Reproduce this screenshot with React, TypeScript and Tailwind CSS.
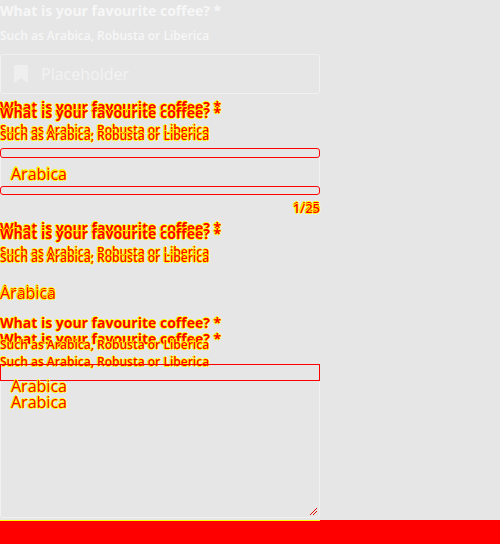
import React from "react";

const diff = "text-[#ff0000] [text-shadow:1px_0_0_#ffff00,-1px_0_0_#ffff00,0_1px_0_#ffff00,0_-1px_0_#ffff00]";

function Doubled({ text, className, shift }: { text: string; className: string; shift: string }) {
  return (
    <div className={`relative ${className} ${diff}`}>
      <div>{text}</div>
      <div className={`absolute left-0 ${shift}`}>{text}</div>
    </div>
  );
}

function Bookmark() {
  return (
    <svg width="14" height="18" viewBox="0 0 14 18" fill="#efefef">
      <path d="M0 0h14v18l-7-5-7 5z" />
    </svg>
  );
}

export default function App() {
  return (
    <div className="w-[500px] h-[544px] bg-[#e6e6e6] flex flex-col font-['Open_Sans',sans-serif] overflow-hidden">
      <div className="w-[320px] flex flex-col">
        {/* plain field */}
        <div className="text-[14px] font-bold leading-[20px] text-[#f7f7f7] pt-[1px]">What is your favourite coffee? *</div>
        <div className="text-[12px] font-semibold leading-[16px] text-[#f7f7f7] mt-[7px]">Such as Arabica, Robusta or Liberica</div>
        <div className="mt-[10px] h-[40px] border border-[#f1f1f1] rounded-[3px] flex items-center pl-[13px] gap-[13px]">
          <Bookmark />
          <span className="text-[16px] text-[#f3f3f3]">Placeholder</span>
        </div>

        {/* input with counter */}
        <Doubled text="What is your favourite coffee? *" className="text-[14px] font-bold leading-[20px] mt-[3px]" shift="top-[6px]" />
        <Doubled text="Such as Arabica, Robusta or Liberica" className="text-[12px] font-semibold leading-[16px] mt-[5px]" shift="top-[6px]" />
        <div className="relative mt-[10px] h-[47px] border border-[#f1f1f1] rounded-[3px] flex items-center pl-[10px]">
          <div className="absolute -left-px -right-px -top-px h-[10px] border border-[#ff0000] rounded-[3px]" />
          <div className="absolute -left-px -right-px -bottom-px h-[9px] border border-[#ff0000] rounded-[3px]" />
          <Doubled text="Arabica" className="text-[16px] leading-[18px] mt-[2px]" shift="top-[1px]" />
        </div>
        <div className="flex justify-end mt-[4px]">
          <Doubled text="1/25" className="text-[13px] font-semibold leading-[14px]" shift="top-[2px] -left-[2px]" />
        </div>

        {/* read only */}
        <Doubled text="What is your favourite coffee? *" className="text-[14px] font-bold leading-[20px] mt-[5px]" shift="top-[6px]" />
        <Doubled text="Such as Arabica, Robusta or Liberica" className="text-[12px] font-semibold leading-[16px] mt-[6px]" shift="top-[6px]" />
        <Doubled text="Arabica" className="text-[16px] leading-[20px] mt-[21px]" shift="top-[2px]" />

        {/* textarea */}
        <Doubled text="What is your favourite coffee? *" className="text-[14px] font-bold leading-[20px] mt-[12px]" shift="top-[16px]" />
        <Doubled text="Such as Arabica, Robusta or Liberica" className="text-[12px] font-semibold leading-[16px] mt-[4px]" shift="top-[17px]" />
        <div className="relative mt-[11px] h-[154px] border border-[#f1f1f1] rounded-[3px] pl-[10px] pt-[12px]">
          <div className="absolute -left-px -right-px -top-px h-[17px] border border-[#ff0000]" />
          <Doubled text="Arabica" className="text-[16px] leading-[18px] font-normal" shift="top-[16px]" />
          <svg className="absolute right-[2px] bottom-[2px]" width="7" height="7" viewBox="0 0 7 7" stroke="#e00000" strokeWidth="1">
            <path d="M0 7L7 0M3 7L7 3" />
          </svg>
        </div>
      </div>
      <div className="mt-auto h-[24px] bg-[#ff0000] relative">
        <div className="absolute left-0 top-0 w-[320px] h-px bg-[#ffff00]" />
      </div>
    </div>
  );
}
